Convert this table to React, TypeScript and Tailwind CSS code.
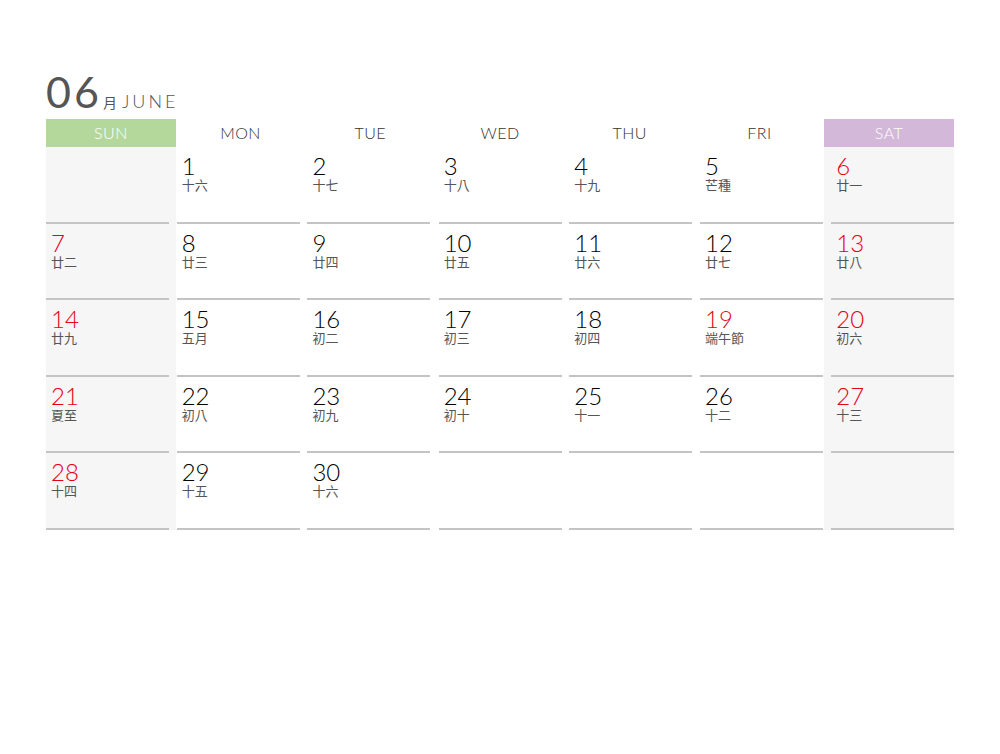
import React from 'react';

type Day = { d: number; lunar: string; red?: boolean };

const days: Day[] = [
  { d: 1, lunar: '十六' },
  { d: 2, lunar: '十七' },
  { d: 3, lunar: '十八' },
  { d: 4, lunar: '十九' },
  { d: 5, lunar: '芒種' },
  { d: 6, lunar: '廿一' },
  { d: 7, lunar: '廿二' },
  { d: 8, lunar: '廿三' },
  { d: 9, lunar: '廿四' },
  { d: 10, lunar: '廿五' },
  { d: 11, lunar: '廿六' },
  { d: 12, lunar: '廿七' },
  { d: 13, lunar: '廿八' },
  { d: 14, lunar: '廿九' },
  { d: 15, lunar: '五月' },
  { d: 16, lunar: '初二' },
  { d: 17, lunar: '初三' },
  { d: 18, lunar: '初四' },
  { d: 19, lunar: '端午節', red: true },
  { d: 20, lunar: '初六' },
  { d: 21, lunar: '夏至' },
  { d: 22, lunar: '初八' },
  { d: 23, lunar: '初九' },
  { d: 24, lunar: '初十' },
  { d: 25, lunar: '十一' },
  { d: 26, lunar: '十二' },
  { d: 27, lunar: '十三' },
  { d: 28, lunar: '十四' },
  { d: 29, lunar: '十五' },
  { d: 30, lunar: '十六' },
];

const heads = ['SUN', 'MON', 'TUE', 'WED', 'THU', 'FRI', 'SAT'];

// lines are spread a bit wider than the columns, so each column nudges its own
const lineOffset = ['ml-[0px]', 'ml-[1px]', 'ml-[2px]', 'ml-[3.5px]', 'ml-[4.5px]', 'ml-[5.5px]', 'ml-[7px]'];
const textOffset = ['pl-[5px]', 'pl-[6px]', 'pl-[7px]', 'pl-[8.5px]', 'pl-[9.5px]', 'pl-[10.5px]', 'pl-[12px]'];

const cjk = { fontFamily: 'Lato, "Noto Sans CJK TC", sans-serif' };

function buildWeeks() {
  const cells: (Day | null)[] = [null, ...days];
  while (cells.length % 7) cells.push(null);
  const weeks: (Day | null)[][] = [];
  for (let i = 0; i < cells.length; i += 7) weeks.push(cells.slice(i, i + 7));
  return weeks;
}

function Cell({ day, col }: { day: Day | null; col: number }) {
  const weekend = col === 0 || col === 6;
  const red = weekend || day?.red;
  return (
    <div className={`flex flex-col ${weekend ? 'bg-[#f6f6f6]' : 'bg-white'}`}>
      <div className={`h-[74.5px] pt-[7px] ${textOffset[col]}`}>
        {day && (
          <>
            <div className={`text-[24px] leading-[24px] font-light ${red ? 'text-[#e60012]' : 'text-[#000]'}`}>
              {day.d}
            </div>
            <div className="text-[13px] leading-[14px] text-[#555]" style={cjk}>
              {day.lunar}
            </div>
          </>
        )}
      </div>
      <div className={`h-[2px] w-[123px] bg-[#c4c4c4] ${lineOffset[col]}`} />
    </div>
  );
}

export default function App() {
  const weeks = buildWeeks();
  return (
    <div className="w-[1000px] h-[754px] bg-white" style={{ fontFamily: 'Lato, "Noto Sans CJK TC", sans-serif' }}>
      <div className="pt-[70px] px-[46px] w-[1000px]">
        {/* Title */}
        <div className="flex items-baseline h-[42px] mb-[7px] text-[#555]">
          <span className="text-[43px] leading-none tracking-[3px]">06</span>
          <span className="ml-[1px] text-[14px] leading-none" style={cjk}>月</span>
          <span className="ml-[5px] text-[18px] leading-none font-light tracking-[3px]">JUNE</span>
        </div>

        {/* Weekday header */}
        <div className="grid grid-cols-7 w-[908px] h-[28px]">
          {heads.map((h, i) => (
            <div
              key={h}
              className={`flex items-center justify-center text-[16px] font-light tracking-[0.5px] ${
                i === 0 ? 'bg-[#b4d89c] text-white' : i === 6 ? 'bg-[#d3b8da] text-white' : 'text-[#333]'
              }`}
            >
              {h}
            </div>
          ))}
        </div>

        {/* Weeks */}
        {weeks.map((w, wi) => (
          <div key={wi} className="grid grid-cols-7 w-[908px]">
            {w.map((day, ci) => (
              <Cell key={ci} day={day} col={ci} />
            ))}
          </div>
        ))}
      </div>
    </div>
  );
}
